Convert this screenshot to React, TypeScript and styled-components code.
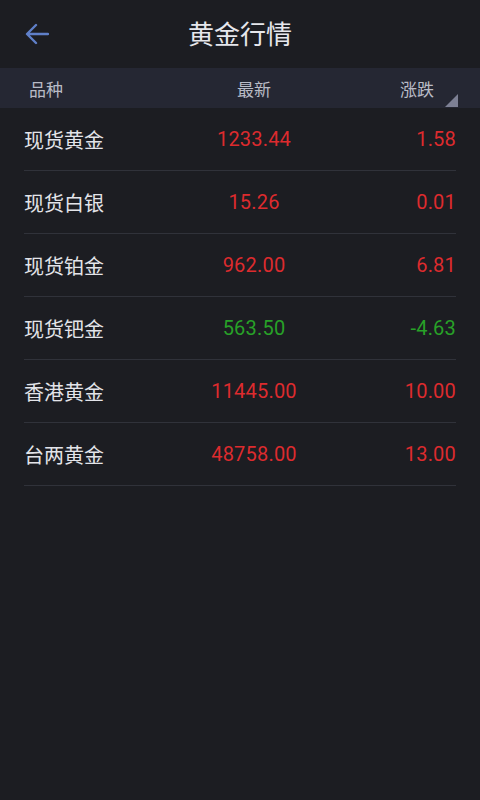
import styled, { createGlobalStyle } from "styled-components";

const GlobalStyle = createGlobalStyle`
	html, body {
		margin: 0;
		padding: 0;
		background: #1c1d22;
	}
	body {
		font-family: Roboto, "Noto Sans CJK SC", sans-serif;
	}
`;

const Page = styled.div`
	width: 480px;
	height: 800px;
	background: #1c1d22;
	display: flex;
	flex-direction: column;
	overflow: hidden;
`;

const TopBar = styled.header`
	height: 68px;
	display: grid;
	grid-template-columns: 76px 1fr 76px;
	align-items: center;
`;

const BackButton = styled.button`
	background: none;
	border: none;
	padding: 0 0 0 25px;
	display: flex;
	align-items: center;
	cursor: pointer;
`;

const Title = styled.h1`
	margin: 0;
	text-align: center;
	font-size: 26px;
	font-weight: 400;
	color: #e6e7ec;
	padding-bottom: 3px;
`;

const HeadRow = styled.div`
	height: 40px;
	background: #252733;
	display: grid;
	grid-template-columns: 158px 134px 1fr;
	align-items: center;
	padding: 0 46px 0 29px;
	position: relative;
	font-size: 17px;
	color: #b9bbc6;
`;

const HeadCell = styled.span<{ align: "left" | "center" | "right" }>`
	text-align: ${props => props.align};
`;

const Corner = styled.span`
	position: absolute;
	right: 22px;
	bottom: 1px;
	width: 0;
	height: 0;
	border-style: solid;
	border-width: 0 0 13px 13px;
	border-color: transparent transparent #7d8094 transparent;
`;

const List = styled.ul`
	list-style: none;
	margin: 0;
	padding: 0 24px;
`;

const Row = styled.li`
	height: 62px;
	display: grid;
	grid-template-columns: 160px 140px 1fr;
	align-items: center;
	border-bottom: 1px solid #30323a;
	font-size: 20px;
`;

const Name = styled.span`
	color: #e3e4e9;
`;

const Num = styled.span<{ up: boolean; align: "center" | "right" }>`
	color: ${props => (props.up ? "#dd2b2e" : "#28a128")};
	text-align: ${props => props.align};
	white-space: nowrap;
	letter-spacing: 0.2px;
`;

const rows = [
	{ name: "现货黄金", last: "1233.44", change: "1.58" },
	{ name: "现货白银", last: "15.26", change: "0.01" },
	{ name: "现货铂金", last: "962.00", change: "6.81" },
	{ name: "现货钯金", last: "563.50", change: "-4.63" },
	{ name: "香港黄金", last: "11445.00", change: "10.00" },
	{ name: "台两黄金", last: "48758.00", change: "13.00" },
];

function App() {
	return (
		<>
			<GlobalStyle />
			<Page>
				<TopBar>
					<BackButton aria-label="back">
						<svg width="24" height="22" viewBox="0 0 24 22" fill="none">
							<path d="M23 11H3M11 2L2 11l9 9" stroke="#5f7fc8" strokeWidth="2.4" strokeLinecap="round" strokeLinejoin="round" />
						</svg>
					</BackButton>
					<Title>黄金行情</Title>
					<span />
				</TopBar>
				<HeadRow>
					<HeadCell align="left">品种</HeadCell>
					<HeadCell align="center">最新</HeadCell>
					<HeadCell align="right">涨跌</HeadCell>
					<Corner />
				</HeadRow>
				<List>
					{rows.map(r => {
						const up = !r.change.startsWith("-");
						return (
							<Row key={r.name}>
								<Name>{r.name}</Name>
								<Num up={up} align="center">{r.last}</Num>
								<Num up={up} align="right">{r.change}</Num>
							</Row>
						);
					})}
				</List>
			</Page>
		</>
	);
}

export default App;
